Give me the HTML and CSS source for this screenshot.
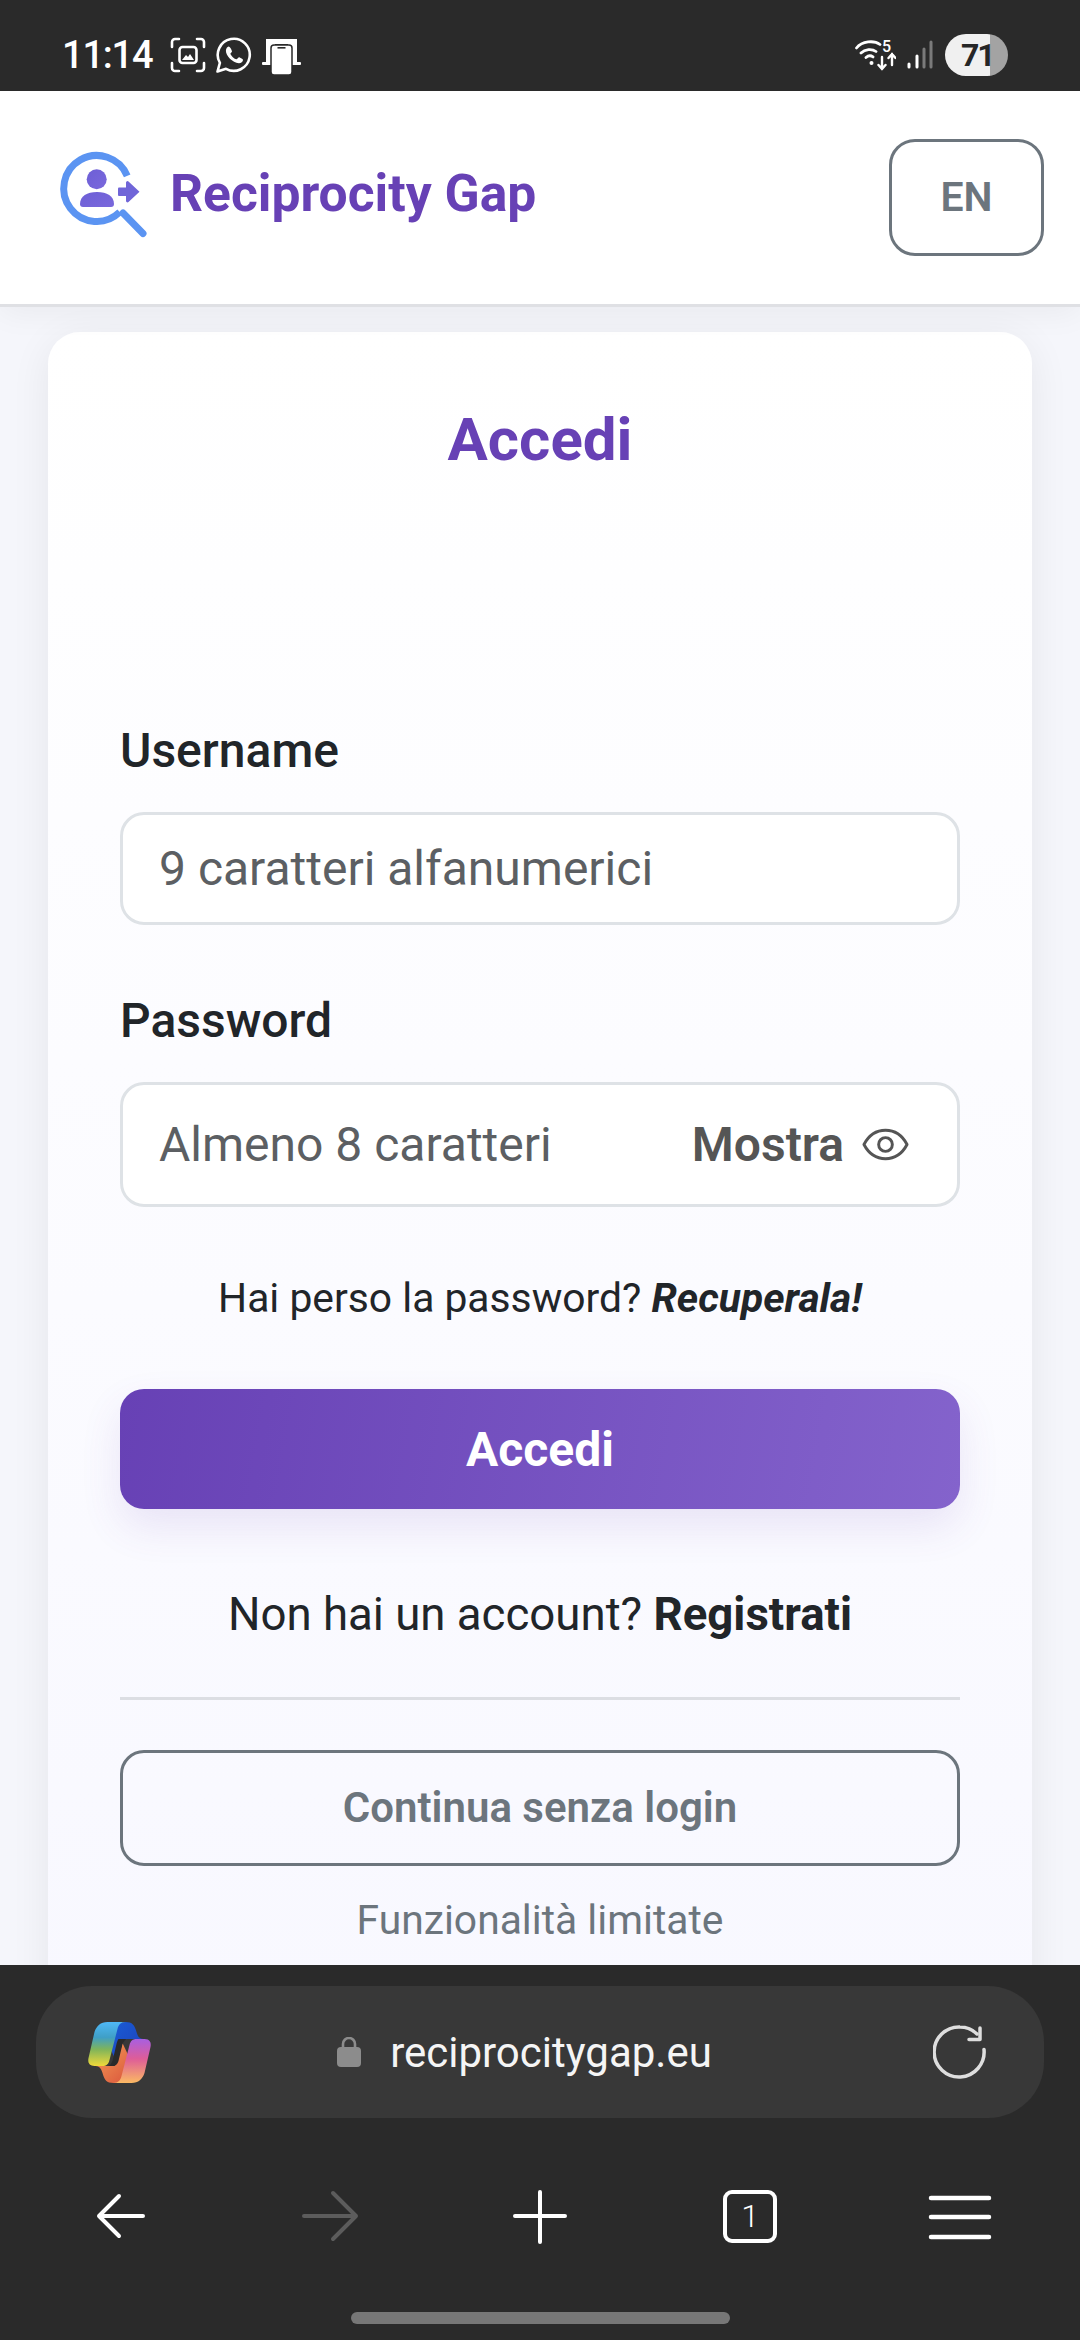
FILE: index.html
```html
<!DOCTYPE html>
<html lang="it">
<head>
<meta charset="utf-8">
<title>Reciprocity Gap</title>
<link rel="stylesheet" href="styles.css">
</head>
<body>
<div class="phone">
  <div class="status">
    <div class="status-left">
      <span class="time">11:14</span>
      <svg class="si s1" viewBox="0 0 36 36" fill="none" stroke="#fff" stroke-width="2.6" stroke-linecap="round"><path d="M2 10V5a3 3 0 0 1 3-3h4M27 2h4a3 3 0 0 1 3 3v5M34 26v5a3 3 0 0 1-3 3h-4M9 34H5a3 3 0 0 1-3-3v-5"/><rect x="9.5" y="10" width="17" height="16" rx="3"/><path d="M12 23l4-5 2 2 2-3 4 6z" fill="#fff" stroke="none"/></svg>
      <svg class="si s2" viewBox="0 0 36 36" fill="none"><path d="M1.500 34.500l2.400-8.700A16 16 0 1 1 10 31.800z" stroke="#fff" stroke-width="2.600" stroke-linejoin="round"/><path d="M12.500 9.500c-1 .2-2.600 2-2.600 4.300 0 5 6.500 12 13 12.400 2.300 0 4-1.700 4.100-3.300 0-.7-3.700-2.800-4.400-2.500-.8.300-1.400 1.700-2.200 1.900-1.500.2-5.700-3.700-6-5.500 0-.8 1.500-1.500 1.600-2.300.1-.7-1.600-4.900-3.500-5z" fill="#fff"/></svg>
      <svg class="si s3" viewBox="0 0 39 36"><path d="M4 0h31v24h-9V5H13v19H4z" fill="#fff"/><rect x="0" y="23" width="12" height="3" rx="1" fill="#fff"/><rect x="27" y="23" width="12" height="3" rx="1" fill="#fff"/><rect x="9" y="6" width="21" height="30" rx="3" fill="#fff" stroke="#2a2a2a" stroke-width="1.500"/><rect x="15.500" y="8" width="8" height="1.600" fill="#2a2a2a"/></svg>
    </div>
    <div class="status-right">
      <div class="wifi">
        <svg class="wifi-i" viewBox="0 0 41 32" fill="none" stroke="#fff" stroke-width="2.800" stroke-linecap="round"><path d="M1.500 9C7 2 19 1 25 5.500M6 14c4-4 11-4.500 15-1.500M11 18.500c2-1.800 5-2 7-.6"/><circle cx="16.500" cy="24" r="2" fill="#fff" stroke="none"/><path d="M27 18v12M23.500 26l3.500 4 3.500-4M37 26V15M33.500 19l3.500-4 3.500 4" stroke-width="2.400"/></svg>
        <span class="wifi-5">5</span>
      </div>
      <svg class="signal" viewBox="0 0 26 30" stroke-linecap="round" stroke-width="3"><path d="M2 27v-3" stroke="#fff"/><path d="M10 27V16" stroke="#fff"/><path d="M17 27V9" stroke="#7a7a7a"/><path d="M24 27V2" stroke="#7a7a7a"/></svg>
      <div class="battery"><span class="bat-num">71</span></div>
    </div>
  </div>

  <div class="viewport">
    <header class="site-head">
      <div class="brand">
        <svg class="logo" viewBox="56 146 92 92" fill="none">
          <defs><linearGradient id="pg" x1="0" y1="0" x2="1" y2="1"><stop offset="0" stop-color="#6d5fd6"/><stop offset="1" stop-color="#7a68dc"/></linearGradient></defs>
          <path d="M127.200 174.800A33 33 0 1 0 119.800 211.100" stroke="#5b94f2" stroke-width="7"/>
          <path d="M123 212L143 232.500" stroke="#5b94f2" stroke-width="7" stroke-linecap="round"/>
          <circle cx="96.700" cy="178.300" r="10" fill="url(#pg)"/>
          <path d="M80 203c0-8 7-12 17-12s17 4 17 12c0 2-1 3-3 3H83c-2 0-3-1-3-3z" fill="url(#pg)"/>
          <path d="M126 181.500a1.500 1.500 0 0 1 2.500-1l11 10.200-11 10.300a1.500 1.500 0 0 1-2.500-1z" fill="#7065d8" stroke="#fff" stroke-width="3" paint-order="stroke"/>
          <rect x="118" y="186.500" width="12" height="8.500" rx="1" fill="#7065d8"/>
        </svg>
        <span class="brand-name">Reciprocity Gap</span>
      </div>
      <button class="lang">EN</button>
    </header>

    <main class="card">
      <h1 class="title">Accedi</h1>
      <label class="label label-user">Username</label>
      <div class="field field-user"><span class="ph">9 caratteri alfanumerici</span></div>
      <label class="label label-pass">Password</label>
      <div class="field field-pass">
        <span class="ph">Almeno 8 caratteri</span>
        <span class="show">Mostra
          <svg class="eye" viewBox="0 0 48 33" fill="none" stroke="#555" stroke-width="3"><path d="M2 16.500C7 7 15 2 24 2s17 5 22 14.500C41 26 33 31 24 31S7 26 2 16.500z" stroke-linejoin="round"/><circle cx="24" cy="16.500" r="7"/></svg>
        </span>
      </div>
      <p class="forgot">Hai perso la password? <a class="forgot-link">Recuperala!</a></p>
      <button class="submit">Accedi</button>
      <p class="signup">Non hai un account? <a class="signup-link">Registrati</a></p>
      <hr class="rule">
      <button class="guest">Continua senza login</button>
      <p class="limited">Funzionalità limitate</p>
    </main>
  </div>

  <div class="chrome">
    <div class="urlbar">
      <svg class="copilot" viewBox="0 0 64 61">
        <defs>
          <linearGradient id="c1" x1="0" y1="0" x2="0" y2="1"><stop offset="0" stop-color="#4fb8f7"/><stop offset=".35" stop-color="#3f9fc6"/><stop offset=".62" stop-color="#7fb45a"/><stop offset="1" stop-color="#f0d93a"/></linearGradient>
          <linearGradient id="c2" x1="0" y1="0" x2="0" y2="1"><stop offset="0" stop-color="#a85fe0"/><stop offset=".45" stop-color="#de5d98"/><stop offset="1" stop-color="#fbb963"/></linearGradient>
          <linearGradient id="c3" x1="0" y1="0" x2="1" y2="1"><stop offset="0" stop-color="#1a5fd8"/><stop offset="1" stop-color="#1c3fb8"/></linearGradient>
          <linearGradient id="c4" x1="0" y1="0" x2="1" y2="1"><stop offset="0" stop-color="#f5a057"/><stop offset="1" stop-color="#d84f3a"/></linearGradient>
        </defs>
        <path d="M38 0c7 0 9 3 11 10 1 3 2 7 7 7H40c-3 0-5 2-6 5L29 40 16 12 24 2z" fill="url(#c3)"/>
        <path d="M26 61c-7 0-9-3-11-10-1-3-2-7-7-7h16c3 0 5-2 6-5l5-18 13 28-14 12z" fill="url(#c4)"/>
        <path d="M31 17h8c-2 1-3 3-4 5l-4 17c-.6 2-2 4-4 5h-6c2-1 3-3 4-5l4-17c.6-2 1-4 2-5z" fill="#2a2a2a"/>
        <path d="M20 0h18c-5 0-7 3-8 7l-8 31c-1 4-3 6-7 6H7c-5 0-7-3-6-8l6-26C9 4 13 0 20 0z" fill="url(#c1)"/>
        <path d="M44 61H26c5 0 7-3 8-7l8-31c1-4 3-6 7-6h8c5 0 7 3 6 8l-6 26c-2 6-6 10-13 10z" fill="url(#c2)"/>
      </svg>
      <div class="url">
        <svg class="lock" viewBox="0 0 24 30"><path d="M6 13V7a6 6 0 0 1 12 0v6" fill="none" stroke="#8c8c8c" stroke-width="2.600"/><rect y="10" width="24" height="20" rx="4" fill="#8c8c8c"/></svg>
        <span class="url-text">reciprocitygap.eu</span>
      </div>
      <svg class="reload" viewBox="0 0 54 54" fill="none" stroke="#dedede" stroke-width="3.500" stroke-linecap="round" stroke-linejoin="round"><path d="M51 24.500A25 25 0 1 1 27 2c6 0 12 2 17 7"/><path d="M47 3v11.500H36"/></svg>
    </div>
    <nav class="toolbar">
      <svg class="tb" viewBox="0 0 70 70" fill="none" stroke="#fff" stroke-width="4" stroke-linecap="round" stroke-linejoin="round"><path d="M58 35H14M34 15L14 35l20 20"/></svg>
      <svg class="tb" viewBox="0 0 70 70" fill="none" stroke="#5c5c5c" stroke-width="4" stroke-linecap="round" stroke-linejoin="round"><path d="M9 35h52M38 12l23 23-23 23"/></svg>
      <svg class="tb" viewBox="0 0 70 70" fill="none" stroke="#fff" stroke-width="4" stroke-linecap="round"><path d="M10 35h50M35 11v50"/></svg>
      <div class="tabs">1</div>
      <svg class="tb" viewBox="0 0 70 70" fill="none" stroke="#fff" stroke-width="4.500" stroke-linecap="round"><path d="M6 17h58M6 36h58M6 56h58"/></svg>
    </nav>
    <div class="home"></div>
  </div>
</div>
</body>
</html>
```
FILE: styles.css
```css
* { box-sizing: border-box; }
html, body { margin: 0; padding: 0; }
body { font-family: Roboto, "Liberation Sans", sans-serif; background: #2a2a2a; }
.phone { width: 1080px; height: 2340px; display: flex; flex-direction: column; overflow: hidden; }

.status { height: 91px; flex: none; background: #2a2a2a; display: flex; justify-content: space-between; align-items: flex-start; padding: 0 72px 0 62px; color: #fff; }
.status-left { display: flex; align-items: flex-start; padding-top: 34px; }
.time { font-size: 38px; font-weight: 500; line-height: 42px; width: 108px; letter-spacing: -1.2px; }
.si { display: block; width: 36px; height: 36px; margin-top: 3px; }
.s2 { margin-left: 10px; }
.s3 { margin-left: 10px; width: 39px; margin-top: 5px; }
.status-right { display: flex; align-items: flex-start; padding-top: 34px; }
.wifi { position: relative; width: 41px; height: 32px; margin-top: 5px; }
.wifi-i { display: block; width: 41px; height: 32px; }
.wifi-5 { position: absolute; left: 27px; top: -1px; font-size: 16px; line-height: 18px; font-weight: 500; color: #fff; }
.signal { display: block; width: 26px; height: 30px; margin: 6px 0 0 11px; }
.battery { width: 63px; height: 42px; margin-left: 12px; border-radius: 21px; background: linear-gradient(90deg, #f0f0f0 0 45px, #a3a3a3 45px); color: #262626; font-size: 32px; font-weight: 700; line-height: 42px; padding-left: 16px; letter-spacing: -2px; }

.viewport { flex: 1; min-height: 0; overflow: hidden; background: #f5f6fb; }
.site-head { height: 216px; background: #fff; border-bottom: 3px solid #dfe0e4; box-shadow: 0 6px 30px rgba(0, 0, 0, .05); position: relative; display: flex; align-items: center; justify-content: space-between; padding: 0 36px 0 56px; }
.brand { display: flex; align-items: center; gap: 22px; height: 92px; margin-bottom: 10px; }
.logo { display: block; width: 92px; height: 92px; }
.brand-name { font-size: 51.6px; font-weight: 700; color: #6741b5; padding-top: 2px; }
.lang { width: 155px; height: 117px; background: #fff; border: 3px solid #6c757d; border-radius: 26px; color: #6c757d; font: 600 41px Roboto, sans-serif; padding: 0 0 2px; }

.card { margin: 25px 48px 0; height: 1700px; padding: 72px 72px 0; background: linear-gradient(180deg, #ffffff 0%, #f8f8ff 100%); border-radius: 32px; box-shadow: 0 8px 40px rgba(0, 0, 0, .07); }
.title { margin: 0; text-align: center; font-size: 60px; line-height: 72px; font-weight: 700; color: #6741b5; }
.label { display: block; font-size: 48px; line-height: 52px; font-weight: 500; color: #212529; }
.label-user { margin-top: 249px; }
.label-pass { margin-top: 70px; }
.field { display: flex; align-items: center; justify-content: space-between; padding: 0 36px; background: #fff; border: 3px solid #dee2e6; border-radius: 24px; }
.field-user { height: 113px; margin-top: 35px; }
.field-pass { height: 125px; margin-top: 35px; }
.ph { font-size: 48px; color: #5c5f63; }
.show { display: flex; align-items: center; gap: 18px; font-size: 48px; font-weight: 600; color: #555; margin-right: 12px; }
.eye { display: block; width: 47px; height: 33px; }
.forgot { margin: 63px 0 0; text-align: center; font-size: 40.8px; line-height: 56px; color: #212529; }
.forgot-link { font-weight: 700; font-style: italic; }
.submit { display: block; width: 100%; height: 120px; margin-top: 63px; border: 0; border-radius: 24px; color: #fff; font: 700 48px Roboto, sans-serif; background: linear-gradient(100deg, #6741b5 0%, #8463cc 100%); box-shadow: 0 18px 40px rgba(103, 65, 181, .12); }
.signup { margin: 78px 0 0; text-align: center; font-size: 45.600px; line-height: 56px; color: #212529; }
.signup-link { font-weight: 700; }
.rule { height: 3px; margin: 54px 0 0; border: 0; background: #dcdee3; }
.guest { display: block; width: 100%; height: 116px; margin-top: 50px; background: transparent; border: 3px solid #6c757d; border-radius: 24px; color: #6c757d; font: 600 42px Roboto, sans-serif; padding: 0 0 2px; }
.limited { margin: 32px 0 0; text-align: center; font-size: 40.8px; line-height: 44px; color: #6c757d; }

.chrome { height: 375px; flex: none; background: #2a2a2a; padding-top: 21px; display: flex; flex-direction: column; position: relative; }
.urlbar { height: 132px; margin: 0 36px; flex: none; background: #383838; border-radius: 56px; display: flex; align-items: center; padding: 0 57px 0 51px; }
.copilot { display: block; width: 65px; height: 61px; flex: none; }
.url { flex: 1; display: flex; align-items: center; justify-content: center; gap: 29px; padding-right: 36px; }
.lock { display: block; width: 24px; height: 30px; }
.url-text { font-size: 42px; color: #f5f5f5; }
.reload { display: block; width: 54px; height: 54px; flex: none; }
.toolbar { display: grid; grid-template-columns: repeat(5, 210px); justify-items: center; align-items: center; padding: 63px 15px 0; }
.tb { display: block; width: 70px; height: 70px; }
.tabs { width: 54px; height: 53px; border: 4px solid #fff; border-radius: 9px; color: #fff; font-size: 32px; font-weight: 300; display: flex; align-items: center; justify-content: center; }
.home { width: 379px; height: 12px; margin: 61px auto 0; border-radius: 6px; background: #777; }
```
